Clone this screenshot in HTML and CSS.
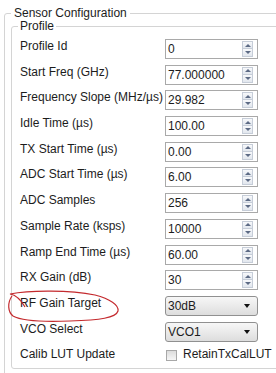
FILE: index.html
```html
<!DOCTYPE html>
<html lang="en">
<head>
	<meta charset="UTF-8">
	<meta name="viewport" content="width=device-width, initial-scale=1.0">
	<title>Sensor Configuration</title>
	<link rel="stylesheet" href="styles.css">
</head>
<body>

	<fieldset class="group">
		<legend>Sensor Configuration</legend>
		<fieldset class="group profile">
			<legend>Profile</legend>
			<div class="rows">
				<span class="label">Profile Id</span>
				<div class="spin"><span>0</span><span class="arrows"><i class="up"></i><i class="down"></i></span></div>

				<span class="label">Start Freq (GHz)</span>
				<div class="spin"><span>77.000000</span><span class="arrows"><i class="up"></i><i class="down"></i></span></div>

				<span class="label">Frequency Slope (MHz/µs)</span>
				<div class="spin"><span>29.982</span><span class="arrows"><i class="up"></i><i class="down"></i></span></div>

				<span class="label">Idle Time (µs)</span>
				<div class="spin"><span>100.00</span><span class="arrows"><i class="up"></i><i class="down"></i></span></div>

				<span class="label">TX Start Time (µs)</span>
				<div class="spin"><span>0.00</span><span class="arrows"><i class="up"></i><i class="down"></i></span></div>

				<span class="label">ADC Start Time (µs)</span>
				<div class="spin"><span>6.00</span><span class="arrows"><i class="up"></i><i class="down"></i></span></div>

				<span class="label">ADC Samples</span>
				<div class="spin"><span>256</span><span class="arrows"><i class="up"></i><i class="down"></i></span></div>

				<span class="label">Sample Rate (ksps)</span>
				<div class="spin"><span>10000</span><span class="arrows"><i class="up"></i><i class="down"></i></span></div>

				<span class="label">Ramp End Time (µs)</span>
				<div class="spin"><span>60.00</span><span class="arrows"><i class="up"></i><i class="down"></i></span></div>

				<span class="label">RX Gain (dB)</span>
				<div class="spin"><span>30</span><span class="arrows"><i class="up"></i><i class="down"></i></span></div>

				<span class="label">RF Gain Target</span>
				<div class="select">30dB</div>

				<span class="label">VCO Select</span>
				<div class="select">VCO1</div>

				<span class="label">Calib LUT Update</span>
				<div class="check"><span class="box"></span><span class="checkText">RetainTxCalLUT</span></div>
			</div>
		</fieldset>
	</fieldset>

	<svg class="mark" viewBox="0 0 276 373" width="276" height="373">
		<path d="M25 307 C21 300 16 295 10 294 C30 290 70 290 95 295 C110 299 119 305 118 311 C116 318 100 320 70 321 C45 322 22 321 13 316 C8 312 7 303 12 296" fill="none" stroke="#c42a2e" stroke-width="1.2"/>
	</svg>

</body>
</html>
```

FILE: styles.css
```css
html, body{
	margin: 0;
	padding: 0;
	overflow: hidden;
	background: #fff;
}

body{
	width: 276px;
	height: 373px;
	position: relative;
	font-family: "Liberation Sans", Arial, sans-serif;
	font-size: 12px;
	line-height: 14px;
	color: #1c1c1c;
}

.group{
	border: 1px solid #d4d4d4;
	border-radius: 3px;
	margin: 6px 0 0 4px;
	padding: 0 0 20px 6px;
	width: 300px;
	box-sizing: border-box;
}

.group legend{
	padding: 0 3px;
}

.profile{
	margin: -1px 0 0 0;
	padding: 6px 0 1px 8px;
	width: auto;
}

.profile legend{
	padding: 0 2px;
	margin-left: -2px;
}

.rows{
	display: grid;
	grid-template-columns: 145px 93px;
	grid-auto-rows: 20px;
	row-gap: 5.7px;
	align-items: start;
}

.spin{
	height: 20px;
	box-sizing: border-box;
	border: 1px solid #a9a9a9;
	background: #fff;
	display: flex;
	align-items: center;
	justify-content: space-between;
	padding: 0 4px 0 2px;
}

.arrows{
	display: flex;
	flex-direction: column;
	width: 11px;
}

.arrows i{
	height: 8px;
	box-sizing: border-box;
	border: 1px solid #c6cdd8;
	background: linear-gradient(#f8f9fb, #e2e7ee);
	display: flex;
	align-items: center;
	justify-content: center;
}

.arrows .down{
	border-top: none;
}

.arrows i::after{
	content: "";
	width: 0;
	height: 0;
	border-left: 3px solid transparent;
	border-right: 3px solid transparent;
}

.arrows .up::after{
	border-bottom: 3px solid #5d6b85;
}

.arrows .down::after{
	border-top: 3px solid #5d6b85;
}

.select{
	height: 20px;
	box-sizing: border-box;
	border: 1px solid #909090;
	border-radius: 3px;
	background: linear-gradient(#f7f7f7, #dddddd);
	display: flex;
	align-items: center;
	justify-content: space-between;
	padding: 0 7px 0 2px;
}

.select::after{
	content: "";
	width: 0;
	height: 0;
	border-left: 3.5px solid transparent;
	border-right: 3.5px solid transparent;
	border-top: 4px solid #111;
}

.check{
	display: flex;
	align-items: center;
	white-space: nowrap;
	padding-left: 1px;
}

.box{
	flex: 0 0 11px;
	width: 11px;
	height: 11px;
	box-sizing: border-box;
	border: 1px solid #a8a8a8;
	background: linear-gradient(#dcdcdc, #f6f6f6);
	margin-top: 3px;
	align-self: start;
}

.checkText{
	flex-shrink: 0;
	margin-left: 6px;
}

.mark{
	position: absolute;
	left: 0;
	top: 0;
	pointer-events: none;
}
```
